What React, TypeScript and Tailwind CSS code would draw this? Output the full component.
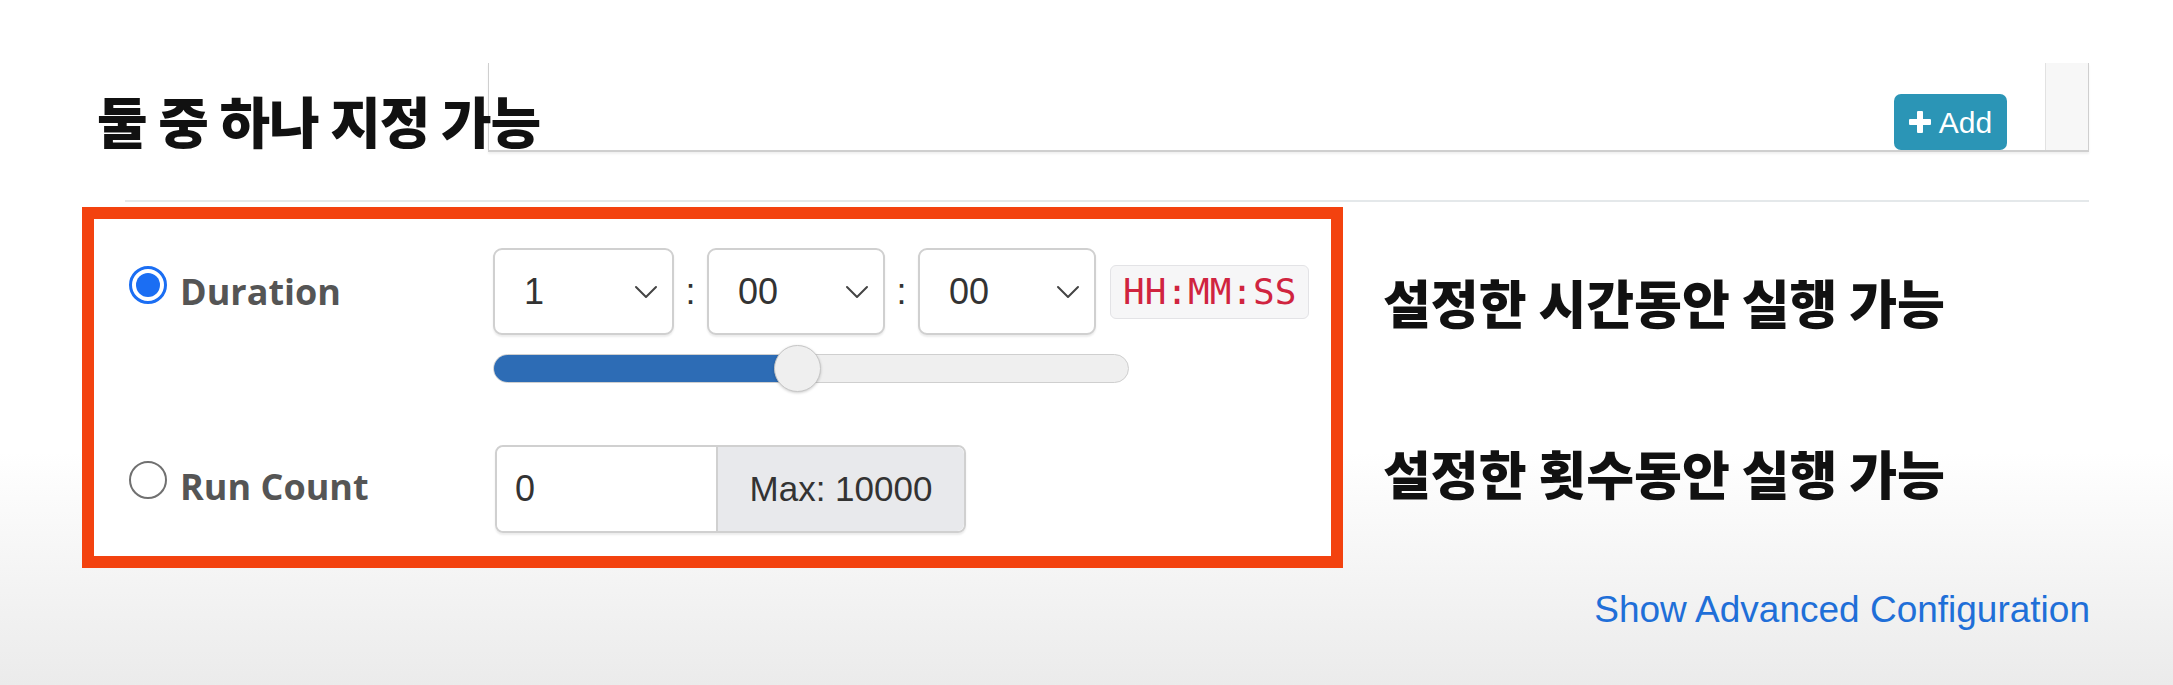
import { ReactNode } from 'react';

function Chevron() {
    return (
        <svg width="24" height="14" viewBox="0 0 24 14" fill="none" stroke="#444" strokeWidth="2" strokeLinecap="round" strokeLinejoin="round">
            <path d="M2 2 L12 12 L22 2" />
        </svg>
    );
}

function PlusIcon() {
    return (
        <svg width="22" height="22" viewBox="0 0 22 22" fill="#fff">
            <rect x="8" y="0" width="6" height="22" rx="1" />
            <rect x="0" y="8" width="22" height="6" rx="1" />
        </svg>
    );
}

function FakeSelect({ value, className }: { value: string; className: string }) {
    return (
        <div className={`flex h-[87px] items-center justify-between rounded-[9px] border-2 border-[#d0d0d0] bg-white pl-[29px] pr-[14px] shadow-[0_2px_2px_rgba(0,0,0,0.08)] ${className}`}>
            <span className="text-[36px] text-[#333]">{value}</span>
            <Chevron />
        </div>
    );
}

function Colon() {
    return <span className="flex w-[33px] justify-center text-[36px] text-[#333]">:</span>;
}

function Radio({ checked }: { checked?: boolean }) {
    if (checked) {
        return (
            <span className="flex h-[38px] w-[38px] shrink-0 items-center justify-center rounded-full border-[3px] border-[#1b6ef3] bg-white">
                <span className="h-[24px] w-[24px] rounded-full bg-[#1b6ef3]" />
            </span>
        );
    }
    return <span className="block h-[38px] w-[38px] shrink-0 rounded-full border-[2.5px] border-[#707070] bg-white" />;
}

function Caption({ children, className }: { children: ReactNode; className?: string }) {
    return (
        <div className={`font-['Noto_Sans_CJK_KR',sans-serif] font-black leading-none text-[#111] ${className ?? ''}`}>
            {children}
        </div>
    );
}

export default function App() {
    return (
        <div className="relative h-[685px] w-[2173px] overflow-hidden bg-gradient-to-b from-white from-[66%] to-[#ebebeb] font-['Liberation_Sans',Arial,sans-serif]">
            {/* video caption laid over the page */}
            <Caption className="absolute left-[97px] top-[92px] text-[55px] tracking-[-1px]">둘 중 하나 지정 가능</Caption>

            {/* upper list panel */}
            <div className="pl-[488px] pr-[84px] pt-[63px]">
                <div className="flex h-[89px] justify-end border-b-2 border-l border-r border-[#cfcfcf] shadow-[0_2px_2px_rgba(0,0,0,0.06)]">
                    <div className="flex items-end pr-[38px]">
                        <button className="flex h-[56px] w-[113px] items-center justify-center gap-[8px] rounded-[7px] bg-[#2b95b6] text-[30px] text-white">
                            <PlusIcon />
                            <span>Add</span>
                        </button>
                    </div>
                    <div className="w-[43px] border-l border-[#e2e2e2] bg-[#f7f7f7]" />
                </div>
            </div>

            <div className="ml-[125px] mr-[84px] mt-[48px] h-[2px] bg-[#e4e8ea]" />

            <div className="ml-[82px] mt-[5px] flex">
                {/* highlighted option box */}
                <div className="w-[1261px] border-[12px] border-[#f3420f] bg-white pb-[23px] pl-[35px] pt-[29px]">
                    <div className="flex">
                        <div className="flex h-[87px] w-[364px] items-center gap-[13px] font-['Open_Sans',sans-serif] text-[36px] font-bold text-[#555]">
                            <span className="mb-[14px]"><Radio checked /></span>
                            <span>Duration</span>
                        </div>
                        <div>
                            <div className="flex items-center">
                                <FakeSelect value="1" className="w-[181px]" />
                                <Colon />
                                <FakeSelect value="00" className="w-[178px]" />
                                <Colon />
                                <FakeSelect value="00" className="w-[178px]" />
                                <span className="ml-[14px] rounded-[6px] border border-[#e3e3e6] bg-[#f6f6f7] px-[12px] py-[5px] font-['DejaVu_Sans_Mono',monospace] text-[36px] leading-[42px] text-[#d0243f]">
                                    HH:MM:SS
                                </span>
                            </div>
                            <div className="relative mt-[10px] flex h-[47px] w-[636px] items-center">
                                <div className="h-[29px] w-full overflow-hidden rounded-full border border-[#cfcfcf] bg-[#efefef]">
                                    <div className="h-full w-[304px] bg-[#2d6cb5]" />
                                </div>
                                <div className="absolute left-[281px] top-0 h-[47px] w-[47px] rounded-full border border-[#c6c6c6] bg-[#efefef] shadow-[0_1px_3px_rgba(0,0,0,0.2)]" />
                            </div>
                        </div>
                    </div>

                    <div className="mt-[53px] flex">
                        <div className="flex h-[88px] w-[366px] items-center gap-[13px] font-['Open_Sans',sans-serif] text-[36px] font-bold text-[#555]">
                            <span className="mb-[18px]"><Radio /></span>
                            <span className="mb-[4px]">Run Count</span>
                        </div>
                        <div className="flex h-[88px] w-[471px] rounded-[8px] border-2 border-[#d0d0d0] shadow-[0_2px_2px_rgba(0,0,0,0.08)]">
                            <div className="flex w-[219px] items-center rounded-l-[7px] bg-white pl-[18px] text-[36px] text-[#333]">0</div>
                            <div className="flex flex-1 items-center justify-center rounded-r-[7px] border-l-2 border-[#d0d0d0] bg-[#e8e9ec] text-[35px] text-[#333]">
                                Max: 10000
                            </div>
                        </div>
                    </div>
                </div>

                {/* video captions beside the box */}
                <div className="ml-[40px] pt-[69px]">
                    <Caption className="text-[52px]">설정한 시간동안 실행 가능</Caption>
                    <Caption className="mt-[119px] text-[52px]">설정한 횟수동안 실행 가능</Caption>
                </div>
            </div>

            <div className="mt-[14px] flex justify-end pr-[83px]">
                <span className="text-[37px] text-[#1f6fd8]">Show Advanced Configuration</span>
            </div>
        </div>
    );
}
